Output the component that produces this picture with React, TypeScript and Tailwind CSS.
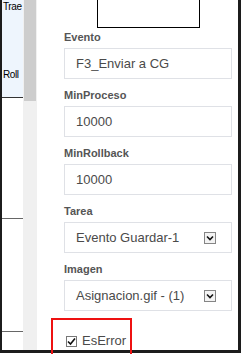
import React from "react";

const fields = [
  { label: "Evento", value: "F3_Enviar a CG", select: false },
  { label: "MinProceso", value: "10000", select: false },
  { label: "MinRollback", value: "10000", select: false },
  { label: "Tarea", value: "Evento Guardar-1", select: true },
  { label: "Imagen", value: "Asignacion.gif - (1)", select: true },
];

function Arrow() {
  return (
    <div className="w-[12px] h-[12px] border border-[#858585] bg-[#f3f3f3] flex items-center justify-center">
      <svg width="10" height="10" viewBox="0 0 10 10">
        <path d="M2 3.5 L5 6.5 L8 3.5" fill="none" stroke="#111" strokeWidth="1.6" />
      </svg>
    </div>
  );
}

export default function App() {
  return (
    <div className="w-[242px] h-[354px] bg-white overflow-hidden font-['Liberation_Sans',Arial,sans-serif]">
      <div className="flex w-[241px] h-[353px] border-l-2 border-r-[3px] border-b-[3px] border-[#1c1c1c]">
        {/* columna izquierda */}
        <div className="w-[21px] flex flex-col text-[10px] text-black leading-[12px] tracking-[-0.4px]">
          <div className="h-[97px] bg-[#eef5fd] flex flex-col justify-between pt-[1px] pb-[16px] pl-[1px] whitespace-nowrap">
            <span>Trae</span>
            <span>Roll</span>
          </div>
          <div className="h-px bg-[#333]" />
          <div className="h-[120px]" />
          <div className="h-px bg-[#666]" />
          <div className="h-[112px]" />
          <div className="h-px bg-[#666]" />
        </div>

        {/* scroll */}
        <div className="w-[14px] bg-[#f0f0f0]">
          <div className="h-[101px] mx-px bg-[#cdcdcd]" />
        </div>

        {/* panel */}
        <div className="flex-1 relative pl-[27px] pr-[6px]">
          <div className="ml-[33px] w-[103px] h-[28px] border-x border-b border-black" />
          <div className="mt-[3px] flex flex-col">
            {fields.map((f) => (
              <div key={f.label} className="mb-[10px]">
                <div className="text-[11px] leading-[13px] font-bold text-[#555]">{f.label}</div>
                <div className="mt-[4px] h-[31px] border border-[#dfe1e6] flex items-center pl-[11px] pr-[15px] text-[13px] text-[#4a4a4a]">
                  <span className="flex-1">{f.value}</span>
                  {f.select && <Arrow />}
                </div>
              </div>
            ))}
          </div>
          <div className="absolute left-[14px] top-[318px] w-[81px] h-[40px] border-2 border-[#ee1111] pl-[13px] pt-[14px]">
            <div className="flex items-center gap-[5px]">
              <div className="w-[11px] h-[11px] border border-[#777] bg-white flex items-center justify-center">
                <svg width="9" height="9" viewBox="0 0 9 9">
                  <path d="M1 4.5 L3.5 7 L8 1.5" fill="none" stroke="#111" strokeWidth="1.6" />
                </svg>
              </div>
              <span className="text-[13px] leading-[14px] text-[#4a4a4a]">EsError</span>
            </div>
          </div>
        </div>
      </div>
    </div>
  );
}
